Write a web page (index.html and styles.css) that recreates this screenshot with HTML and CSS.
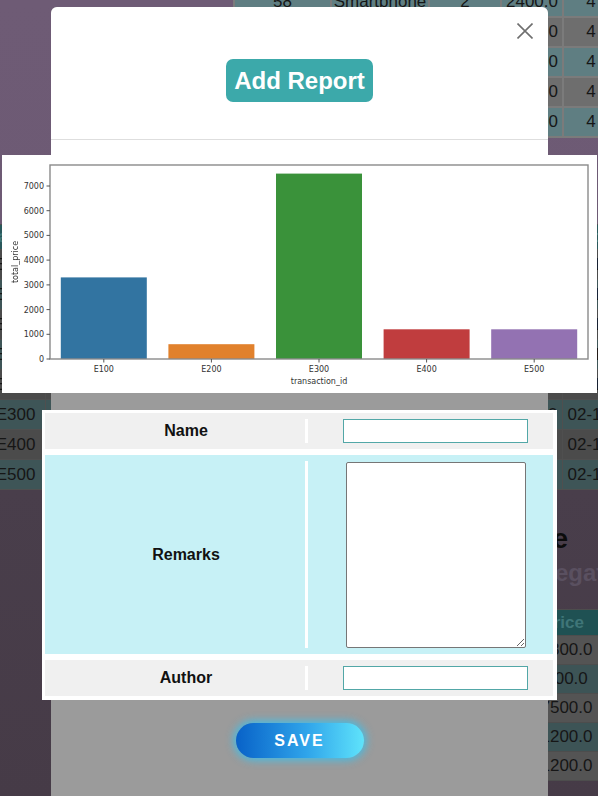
FILE: index.html
```html
<!DOCTYPE html>
<html lang="en">
<head>
<meta charset="utf-8">
<title>Add Report</title>
<link rel="stylesheet" href="styles.css">
</head>
<body>
<div class="page">
  <table class="bg-table products">
    <colgroup><col class="p1"><col class="p2"><col class="p3"><col class="p4"><col class="p5"></colgroup>
    <tr class="teal"><td>58</td><td>Smartphone</td><td>2</td><td>2400.0</td><td>4</td></tr>
    <tr class="gray"><td>59</td><td>Laptop</td><td>1</td><td>1200.0</td><td>4</td></tr>
    <tr class="teal"><td>60</td><td>Tablet</td><td>3</td><td>1500.0</td><td>4</td></tr>
    <tr class="gray"><td>61</td><td>Monitor</td><td>2</td><td>1000.0</td><td>4</td></tr>
    <tr class="teal"><td>62</td><td>Headphones</td><td>4</td><td>3000.0</td><td>4</td></tr>
  </table>

  <table class="bg-table transactions">
    <colgroup><col class="t1"><col class="t2"><col class="t3"><col class="t4"><col class="t5"><col class="t6"></colgroup>
    <tr class="head"><th>transaction_id</th><th>product</th><th>quantity</th><th>customer</th><th>total_price</th><th>date</th></tr>
    <tr class="gray"><td>E100</td><td>Laptop</td><td>1</td><td>C01</td><td>1200.0</td><td>02-10-2024</td></tr>
    <tr class="teal"><td>E100</td><td>Mouse</td><td>3</td><td>C01</td><td>900.0</td><td>02-10-2024</td></tr>
    <tr class="gray"><td>E100</td><td>Keyboard</td><td>2</td><td>C01</td><td>1200.0</td><td>02-10-2024</td></tr>
    <tr class="teal"><td>E200</td><td>Charger</td><td>2</td><td>C02</td><td>600.0</td><td>02-11-2024</td></tr>
    <tr class="gray"><td>E300</td><td>Tablet</td><td>2</td><td>C03</td><td>5100.0</td><td>02-12-2024</td></tr>
    <tr class="teal"><td>E300</td><td>Smartphone</td><td>1</td><td>C03</td><td>2400.0</td><td>02-12-2024</td></tr>
    <tr class="gray"><td>E400</td><td>Monitor</td><td>1</td><td>C04</td><td>600.0</td><td>02-13-2024</td></tr>
    <tr class="teal"><td>E500</td><td>Speaker</td><td>2</td><td>C05</td><td>600.0</td><td>02-14-2024</td></tr>
  </table>

  <h2 class="bg-title">Transaction Table</h2>
  <p class="bg-subtitle">Aggregated by transaction</p>

  <table class="bg-table aggregated">
    <colgroup><col class="a1"><col class="a2"></colgroup>
    <tr class="head"><th>transaction_id</th><th class="price-head">total_price</th></tr>
    <tr class="gray"><td>E100</td><td>3300.0</td></tr>
    <tr class="teal"><td>E200</td><td>600.0</td></tr>
    <tr class="gray"><td>E300</td><td>7500.0</td></tr>
    <tr class="teal"><td>E400</td><td>1200.0</td></tr>
    <tr class="gray"><td>E500</td><td>1200.0</td></tr>
  </table>
</div>

<div class="modal">
  <div class="modal-header">
    <button class="close-btn" type="button" aria-label="Close">
      <svg width="16" height="16" viewBox="0 0 16 16"><path d="M0.5 0.5 L15.5 15.5 M15.5 0.5 L0.5 15.5" stroke="#6f6f6f" stroke-width="1.6" fill="none"/></svg>
    </button>
    <h5 class="add-report">Add Report</h5>
  </div>
  <div class="modal-body">
    <div class="chart">
      <svg width="595" height="238" viewBox="0 0 595 238">
        <rect x="0" y="0" width="595" height="238" fill="#ffffff"/>
        <rect x="58.8" y="122.4" width="86" height="81.6" fill="#3274a1"/>
        <rect x="166.4" y="189.2" width="86" height="14.8" fill="#e1812c"/>
        <rect x="274" y="18.6" width="86" height="185.4" fill="#3a923a"/>
        <rect x="381.6" y="174.3" width="86" height="29.7" fill="#c03d3e"/>
        <rect x="489.2" y="174.3" width="86" height="29.7" fill="#9372b2"/>
        <rect x="48" y="10" width="538" height="194" fill="none" stroke="#8a8a8a" stroke-width="1.4"/>
        <g stroke="#555" stroke-width="1">
          <path d="M44.5 204H48M44.5 179.3H48M44.5 154.6H48M44.5 129.9H48M44.5 105.1H48M44.5 80.4H48M44.5 55.7H48M44.5 31H48"/>
          <path d="M101.8 204V207.5M209.4 204V207.5M317 204V207.5M424.6 204V207.5M532.2 204V207.5"/>
        </g>
        <g class="tick" text-anchor="end">
          <text x="42" y="207">0</text>
          <text x="42" y="182.3">1000</text>
          <text x="42" y="157.6">2000</text>
          <text x="42" y="132.9">3000</text>
          <text x="42" y="108.1">4000</text>
          <text x="42" y="83.4">5000</text>
          <text x="42" y="58.7">6000</text>
          <text x="42" y="34">7000</text>
        </g>
        <g class="tick" text-anchor="middle">
          <text x="101.8" y="216.5">E100</text>
          <text x="209.4" y="216.5">E200</text>
          <text x="317" y="216.5">E300</text>
          <text x="424.6" y="216.5">E400</text>
          <text x="532.2" y="216.5">E500</text>
          <text x="317" y="228.5">transaction_id</text>
          <text transform="translate(16 107) rotate(-90)">total_price</text>
        </g>
      </svg>
    </div>
  </div>

  <div class="modal-lower">
    <form class="report-form">
      <div class="form-row row-plain">
        <label class="form-label" for="name">Name</label>
        <span class="divider"></span>
        <div class="form-field"><input id="name" class="text-input" type="text"></div>
      </div>
      <div class="form-row row-tinted row-tall">
        <label class="form-label" for="remarks">Remarks</label>
        <span class="divider"></span>
        <div class="form-field"><textarea id="remarks" class="text-area"></textarea></div>
      </div>
      <div class="form-row row-plain">
        <label class="form-label" for="author">Author</label>
        <span class="divider"></span>
        <div class="form-field"><input id="author" class="text-input" type="text"></div>
      </div>
    </form>

    <button class="save-btn" type="button">SAVE</button>
  </div>
</div>
</body>
</html>
```

FILE: styles.css
```css
* {
  box-sizing: border-box;
}

html,
body {
  margin: 0;
  padding: 0;
}

body {
  width: 598px;
  height: 796px;
  overflow: hidden;
  font-family: "Liberation Sans", Arial, sans-serif;
}

/* ---------- background page (dimmed) ---------- */
.page {
  display: flow-root;
  min-height: 796px;
  overflow: hidden;
  background: linear-gradient(to bottom, #6e5b75 0, #6d5a74 230px, #493e4b 490px, #463b47 796px);
}

.bg-table {
  border-collapse: collapse;
  table-layout: fixed;
  font-size: 17px;
  color: #161616;
}

.bg-table td,
.bg-table th {
  padding: 0;
  text-align: center;
  white-space: nowrap;
  overflow: hidden;
  line-height: 20px;
}

.products {
  width: 385px;
  margin: -14px 0 0 233px;
}

.products .p1 { width: 97px; }
.products .p2 { width: 98px; }
.products .p3 { width: 72px; }
.products .p4 { width: 62px; }
.products .p5 { width: 56px; }

.products tr {
  height: 30px;
}

.products td {
  border: 2px solid #7b7b7b;
}

.products .teal { background: #5f7e82; }
.products .gray { background: #6e6e6e; }

.transactions {
  width: 674px;
  margin: 86px 0 0 -15px;
}

.transactions .t1 { width: 60px; }
.transactions .t2 { width: 150px; }
.transactions .t3 { width: 150px; }
.transactions .t4 { width: 155px; }
.transactions .t5 { width: 62px; }
.transactions .t6 { width: 97px; }

.transactions tr { height: 30px; }
.transactions tr.head { height: 25px; }

.transactions td,
.transactions th {
  border: 1px solid #4f4f4f;
}

.bg-table .head {
  background: #2a585b;
  color: #3f7678;
  font-weight: bold;
}

.transactions .teal { background: #3e5557; }
.transactions .gray { background: #4b4b4b; }

.bg-title {
  margin: 33px 0 0;
  padding-right: 30px;
  text-align: right;
  font-size: 28px;
  line-height: 32px;
  font-weight: bold;
  color: #0c0c0c;
  white-space: nowrap;
}

.bg-subtitle {
  margin: 4px 0 0;
  padding-left: 499px;
  font-size: 24px;
  line-height: 28px;
  font-weight: bold;
  color: #5a5060;
  white-space: nowrap;
}

.aggregated {
  width: 372px;
  margin: 22px 0 0 280px;
}

.aggregated .a1 { width: 200px; }
.aggregated .a2 { width: 172px; }

.aggregated tr { height: 29px; }
.aggregated tr.head { height: 26px; background: #1f5153; }

.aggregated .price-head {
  text-align: left;
  padding-left: 17px;
}

.aggregated td,
.aggregated th {
  border: 1px solid #4d4d4d;
}

.aggregated .gray { background: #545454; }
.aggregated .teal { background: #3d5456; }

/* ---------- modal ---------- */
.modal {
  position: fixed;
  top: 7px;
  left: 51px;
  width: 497px;
  bottom: 0;
  display: flex;
  flex-direction: column;
  background: #9b9b9b;
  border-radius: 6px 6px 0 0;
}

.modal-header {
  display: flex;
  flex-direction: column;
  align-items: center;
  padding: 16px 15px 37px;
  background: #ffffff;
  border-bottom: 1px solid #dedede;
  border-radius: 6px 6px 0 0;
}

.close-btn {
  align-self: flex-end;
  display: block;
  width: 16px;
  height: 16px;
  margin: 0 0 20px;
  padding: 0;
  border: 0;
  background: none;
}

.close-btn svg {
  display: block;
}

.add-report {
  margin: 0;
  height: 43px;
  padding: 0 8px;
  border-radius: 7px;
  background: #3ca9aa;
  color: #ffffff;
  font-size: 24px;
  line-height: 43px;
  font-weight: bold;
}

.modal-body {
  flex: none;
  display: flex;
  flex-direction: column;
  align-items: center;
  padding-top: 15px;
  background: #ffffff;
}

.chart {
  flex: none;
  width: 595px;
  height: 238px;
  background: #ffffff;
}

.chart svg {
  display: block;
}

.chart .tick {
  font-family: "DejaVu Sans", sans-serif;
  font-size: 8px;
  fill: #333333;
}

.modal-lower {
  flex: 1;
  display: flex;
  flex-direction: column;
  align-items: center;
  padding-top: 17px;
  background: #9b9b9b;
}

/* ---------- form ---------- */
.report-form {
  flex: none;
  width: 515px;
  margin: 0;
  padding: 3px 4px 4px 3px;
  background: #ffffff;
  display: flex;
  flex-direction: column;
  gap: 6px;
}

.form-row {
  display: flex;
  height: 36px;
}

.row-plain { background: #f0f0f0; }
.row-tinted { background: #c7f1f6; }
.row-tall { height: 199px; }

.form-label {
  width: 260px;
  padding-left: 22px;
  display: flex;
  align-items: center;
  justify-content: center;
  font-size: 16px;
  font-weight: bold;
  color: #111111;
}

.divider {
  width: 3px;
  margin: 6px 0;
  background: #ffffff;
}

.form-field {
  flex: 1;
  display: flex;
  align-items: center;
  padding-left: 35px;
}

.text-input {
  width: 185px;
  height: 24px;
  margin: 0;
  padding: 0 4px;
  border: 1px solid #52a7a7;
  border-radius: 0;
  background: #ffffff;
  outline: none;
}

.text-area {
  width: 180px;
  height: 186px;
  margin: 0 0 0 3px;
  padding: 2px;
  border: 1px solid #767676;
  border-radius: 2px;
  background: #ffffff;
  resize: both;
}

.save-btn {
  flex: none;
  width: 128px;
  height: 35px;
  margin-top: 23px;
  padding: 0;
  border: 0;
  border-radius: 18px;
  background: linear-gradient(90deg, #0862c8 0%, #2fa4ea 55%, #5fe3fb 100%);
  box-shadow: 0 0 8px 2px rgba(48, 196, 246, 0.85);
  color: #ffffff;
  font-family: "Liberation Sans", Arial, sans-serif;
  font-size: 16px;
  font-weight: bold;
  letter-spacing: 2px;
}
```
